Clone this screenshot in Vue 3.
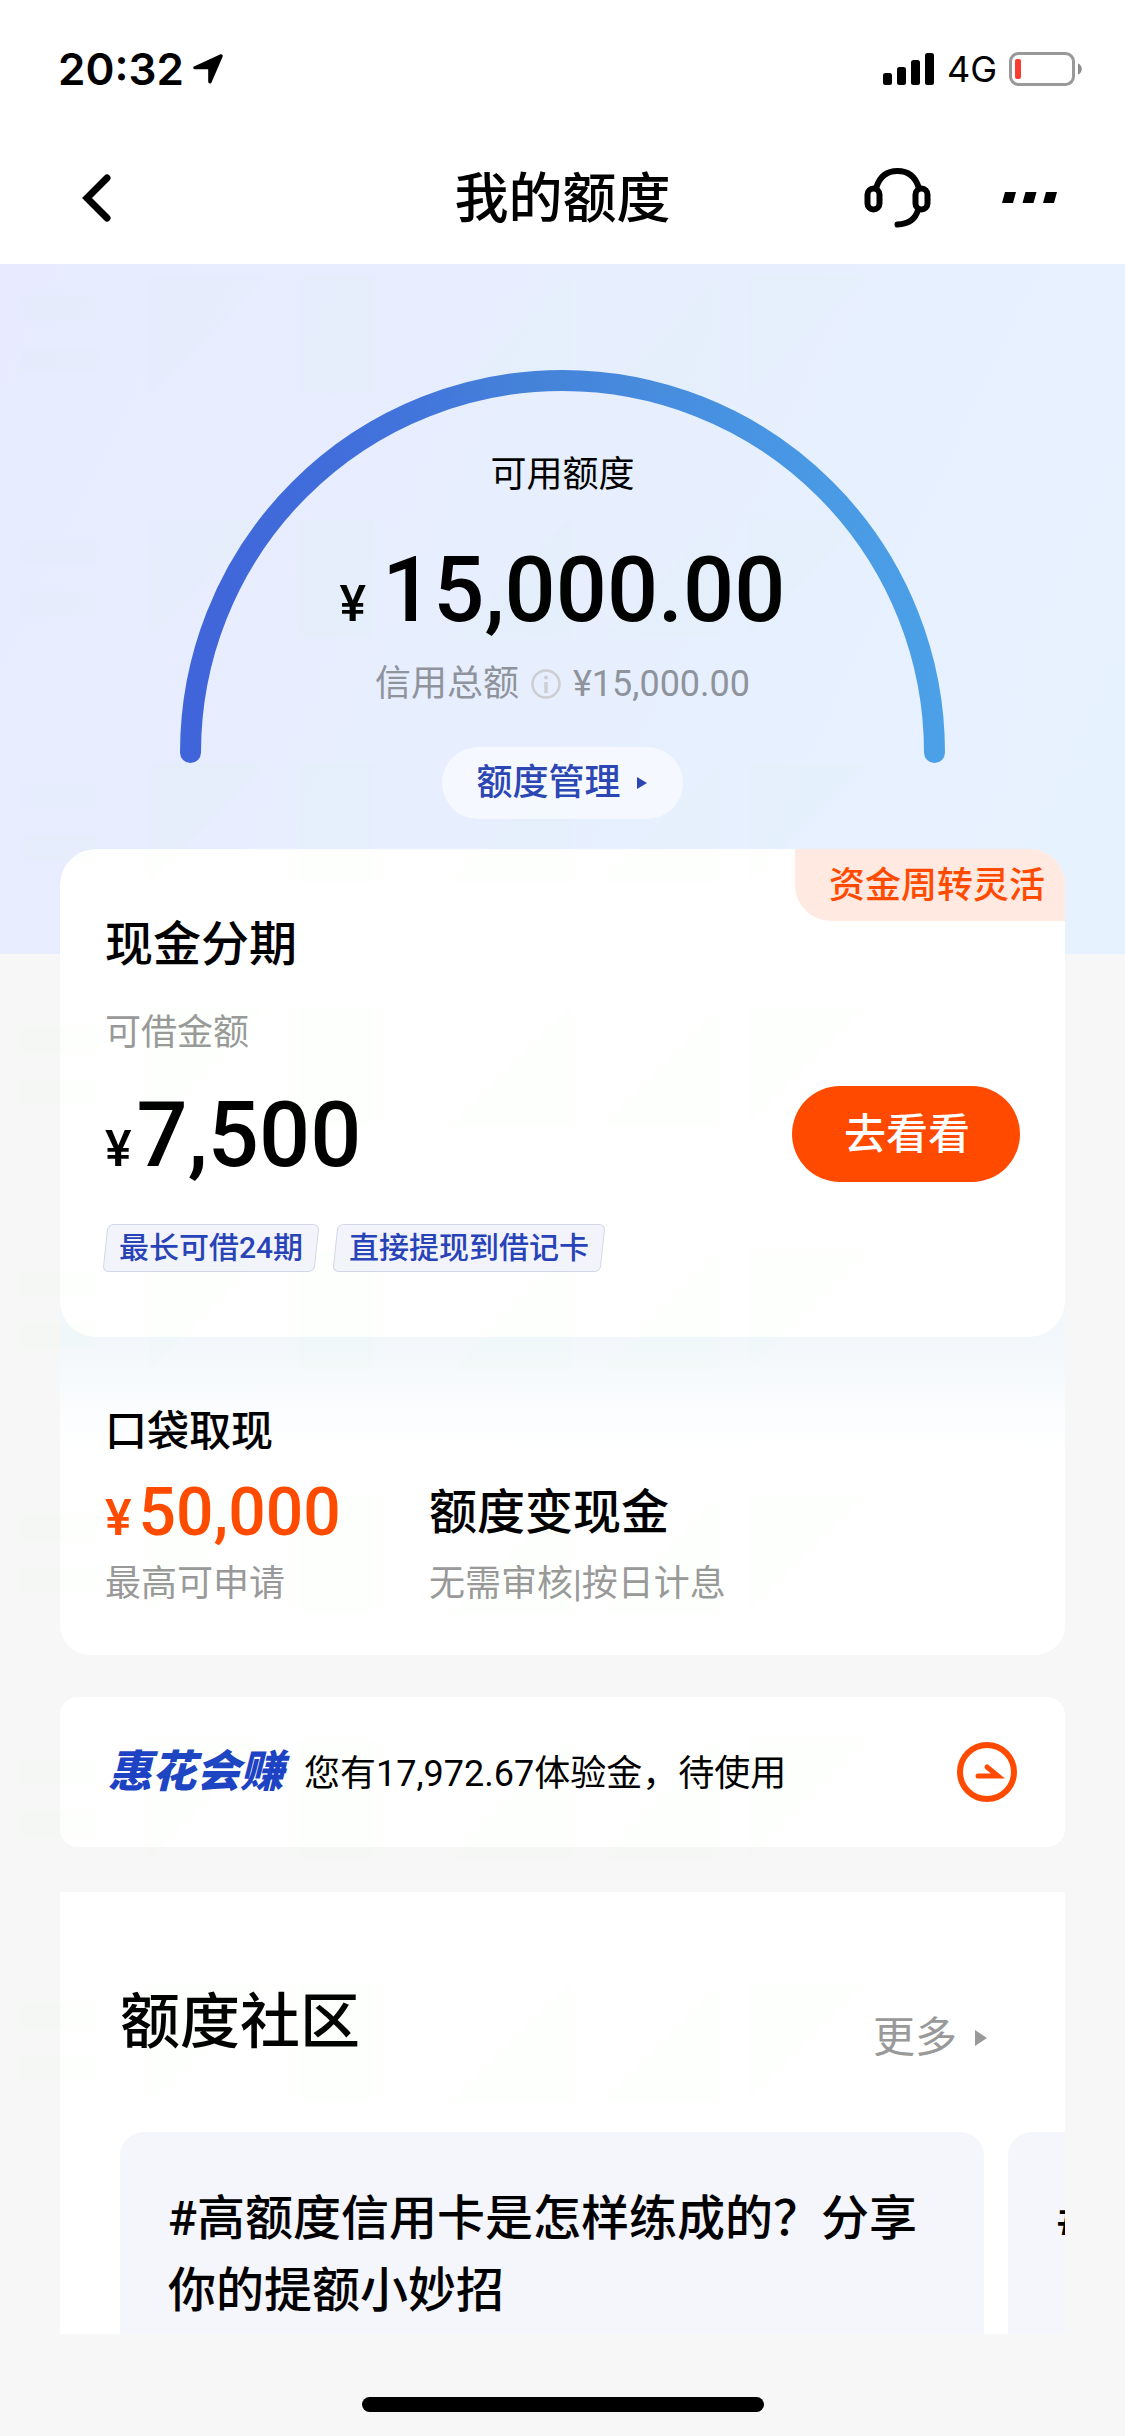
<script setup>
const benefits = ['最长可借24期', '直接提现到借记卡']
const topics = ['#高额度信用卡是怎样练成的？分享你的提额小妙招', '#额度']
</script>

<template>
  <div class="page">
    <div class="status">
      <div class="status-group">
        <span class="time">20:32</span>
        <svg class="location" width="32" height="32" viewBox="0 0 32 32" aria-hidden="true">
          <path d="M2.500 13.200 28 1.400c2-.8 3.300.5 2.500 2.500L19.600 29.200c-.9 2-3.400 1.500-3.400-.7V16.200H3.300c-2.300 0-2.800-2.200-.8-3z" fill="#000" />
        </svg>
      </div>
      <div class="status-group">
        <svg width="52" height="34" viewBox="0 0 52 34" aria-hidden="true">
          <rect x="0" y="21" width="9" height="12" rx="2.500" />
          <rect x="14" y="15" width="9" height="18" rx="2.500" />
          <rect x="28" y="8" width="9" height="25" rx="2.500" />
          <rect x="42" y="1" width="9" height="32" rx="2.500" />
        </svg>
        <span class="network">4G</span>
        <svg width="74" height="34" viewBox="0 0 74 34" aria-hidden="true">
          <rect x="1.500" y="1.500" width="63" height="31" rx="8" fill="none" stroke="#999" stroke-width="3" />
          <rect x="6" y="7" width="6" height="20" rx="2" fill="#fb3a30" />
          <path d="M69 11.500c5 1.500 5 9.500 0 11z" fill="#8c8c8c" />
        </svg>
      </div>
    </div>

    <header class="nav">
      <button class="icon-button" type="button" aria-label="返回">
        <svg width="58" height="50" viewBox="-13 0 58 50">
          <path d="M27 5 7 25l20 20" fill="none" stroke="#000" stroke-width="7" stroke-linecap="round" stroke-linejoin="miter" />
        </svg>
      </button>
      <h1>我的额度</h1>
      <div class="nav-actions">
        <button class="icon-button" type="button" aria-label="客服">
          <svg width="68" height="62" viewBox="0 0 68 62" fill="none" stroke="#000" stroke-width="6">
            <path d="M12.500 20C16 9 24 4 33.500 4S51 9 54.500 20" />
            <rect x="3.500" y="21.500" width="12" height="21" rx="6" />
            <rect x="51.500" y="21.500" width="12" height="21" rx="6" />
            <path d="M54 43c-2.500 9-9 14-20.500 14.500" stroke-linecap="round" />
          </svg>
        </button>
        <button class="icon-button" type="button" aria-label="更多操作">
          <svg width="56" height="12" viewBox="0 0 56 12">
            <path d="M3 0h11l-3 11H0zM23.500 0h11l-3 11h-11zM44 0h11l-3 11H41z" />
          </svg>
        </button>
      </div>
    </header>

    <main>
      <section class="hero">
        <svg class="arc" width="765" height="393" viewBox="0 0 765 393" aria-hidden="true">
          <defs>
            <linearGradient id="arcTone" x1="0" y1="0" x2="1" y2="0">
              <stop offset="0" stop-color="#4065da" />
              <stop offset="0.2" stop-color="#416edb" />
              <stop offset="0.5" stop-color="#4584dc" />
              <stop offset="0.8" stop-color="#4997e4" />
              <stop offset="1" stop-color="#4ba0e7" />
            </linearGradient>
          </defs>
          <path d="M10.500 382.500A372 372 0 0 1 754.500 382.500" fill="none" stroke="url(#arcTone)" stroke-width="21" stroke-linecap="round" />
        </svg>
        <div class="summary">
          <p class="summary-label">可用额度</p>
          <p class="summary-amount"><span class="yen">¥</span><span class="figure">15,000.00</span></p>
          <p class="summary-total">
            <span>信用总额</span>
            <svg width="30" height="30" viewBox="0 0 30 30" aria-hidden="true">
              <circle cx="15" cy="15" r="13.500" fill="none" stroke="#cdced2" stroke-width="2.500" />
              <circle cx="15" cy="8.500" r="2" fill="#cdced2" />
              <path d="M15 13v11" stroke="#cdced2" stroke-width="3.500" />
            </svg>
            <span>¥15,000.00</span>
          </p>
          <button class="manage" type="button">
            额度管理
            <svg width="10" height="12" viewBox="0 0 10 12" aria-hidden="true"><path d="M0 0 10 6 0 12z" fill="#2c46b4" /></svg>
          </button>
        </div>
      </section>

      <div class="cards">
        <section class="card loan">
          <span class="ribbon">资金周转灵活</span>
          <h2>现金分期</h2>
          <p class="muted loan-label">可借金额</p>
          <div class="loan-row">
            <p class="loan-amount"><span class="yen">¥</span><span class="figure">7,500</span></p>
            <button class="go" type="button">去看看</button>
          </div>
          <ul class="benefits">
            <li v-for="item in benefits" :key="item">{{ item }}</li>
          </ul>
        </section>

        <section class="pocket">
          <h3>口袋取现</h3>
          <div class="pocket-grid">
            <div>
              <p class="pocket-amount"><span class="yen">¥</span><span class="figure">50,000</span></p>
              <p class="muted">最高可申请</p>
            </div>
            <div>
              <p class="pocket-title">额度变现金</p>
              <p class="muted">无需审核|按日计息</p>
            </div>
          </div>
        </section>

        <a class="card earn" href="#">
          <em>惠花会赚</em>
          <span class="earn-text">您有17,972.67体验金，待使用</span>
          <svg width="60" height="60" viewBox="0 0 60 60" fill="none" stroke="#ff4a00" aria-hidden="true">
            <circle cx="30" cy="30" r="27" stroke-width="6" />
            <path d="M21 34h20L30 25" stroke-width="5" stroke-linecap="round" stroke-linejoin="miter" />
          </svg>
        </a>

        <section class="community">
          <div class="community-head">
            <h2>额度社区</h2>
            <a class="more" href="#">
              更多
              <svg width="12" height="16" viewBox="0 0 12 16" aria-hidden="true"><path d="M0 0 12 8 0 16z" fill="#999" /></svg>
            </a>
          </div>
          <div class="topics">
            <article v-for="topic in topics" :key="topic">{{ topic }}</article>
          </div>
        </section>
      </div>

      <svg class="watermark" aria-hidden="true">
        <defs>
          <pattern id="mark" width="900" height="244" patternUnits="userSpaceOnUse" y="11">
            <path
              d="M22 20h75v26H22zM22 72h75v26H22zM150 0h116L150 119zM298 0h76v119h-76zM570 0v119H452zM719 0v119H603zM749 0h117L749 117z"
              fill="#40ff20"
              fill-opacity="0.012"
            />
          </pattern>
        </defs>
        <rect width="900" height="100%" fill="url(#mark)" />
      </svg>
    </main>

    <footer class="home"><span></span></footer>
  </div>
</template>

<style>
body {
  margin: 0;
  background: #f7f7f7;
}
</style>

<style scoped>
.page {
  display: flex;
  flex-direction: column;
  min-height: 100vh;
  overflow: hidden;
  background: #f7f7f7;
  color: #000;
  font-family: Roboto, "Noto Sans CJK SC", sans-serif;
  font-size: 36px;
  line-height: 48px;
}

h1,
h2,
h3,
p,
ul {
  margin: 0;
  padding: 0;
  font-weight: 500;
}

p {
  font-weight: 400;
}

button {
  padding: 0;
  border: 0;
  background: none;
  color: inherit;
  font: inherit;
  cursor: pointer;
}

a {
  color: inherit;
  text-decoration: none;
}

svg {
  display: block;
  flex: none;
}

.status {
  display: flex;
  justify-content: space-between;
  align-items: center;
  box-sizing: border-box;
  height: 132px;
  padding: 6px 42px 0 58px;
  background: #fff;
  font-family: Inter, sans-serif;
}

.status-group {
  display: flex;
  align-items: center;
  gap: 12px;
}

.status-group:first-child {
  gap: 8px;
}

.time {
  font-size: 44px;
  font-weight: 600;
}

.network {
  font-size: 36px;
  font-weight: 400;
}

.nav {
  display: grid;
  grid-template-columns: 1fr auto 1fr;
  align-items: center;
  height: 132px;
  padding: 0 67px;
  background: #fff;
}

.nav h1 {
  padding-top: 3px;
  font-size: 54px;
  line-height: 72px;
}

.nav-actions {
  display: flex;
  justify-content: flex-end;
  align-items: center;
  gap: 70px;
}

.icon-button {
  justify-self: start;
}

main {
  position: relative;
  flex: 1;
  display: flex;
  flex-direction: column;
}

.hero {
  display: grid;
  justify-items: center;
  padding: 106px 0 135px;
  background: linear-gradient(115deg, #e8ebff 0%, #e7effe 50%, #e7f2ff 100%);
}

.arc,
.summary {
  grid-area: 1 / 1;
}

.summary {
  display: flex;
  flex-direction: column;
  align-items: center;
  padding-top: 81px;
}

.figure,
.yen {
  font-weight: 500;
}

.yen {
  font-size: 50px;
  line-height: 50px;
}

.summary-amount {
  display: flex;
  align-items: baseline;
  gap: 16px;
  margin-top: 38px;
  font-size: 90px;
  line-height: 108px;
}

.summary-total {
  display: flex;
  align-items: center;
  gap: 12px;
  margin-top: 15px;
  color: #8f939c;
}

.manage {
  display: flex;
  align-items: center;
  gap: 16px;
  height: 72px;
  margin-top: 39px;
  padding: 0 36px 0 34px;
  border-radius: 36px;
  background: rgba(255, 255, 255, 0.6);
  color: #2c46b4;
  font-weight: 500;
}

.cards {
  flex: 1;
  display: flex;
  flex-direction: column;
  margin: -105px 60px 0;
}

.card {
  background: #fff;
}

.muted {
  color: #999;
}

.loan {
  position: relative;
  z-index: 1;
  padding: 60px 45px 65px;
  border-radius: 36px;
}

.loan h2,
.pocket-title {
  font-size: 48px;
  line-height: 72px;
  font-weight: 500;
}

.ribbon {
  position: absolute;
  top: 0;
  right: 0;
  padding: 13px 20px 11px 34px;
  border-radius: 0 36px 0 36px;
  background: #ffe9e1;
  color: #ff4a00;
  font-weight: 500;
}

.loan-label {
  margin-top: 28px;
}

.loan-row {
  display: flex;
  justify-content: space-between;
  align-items: center;
  margin-top: 29px;
}

.loan-amount {
  display: flex;
  align-items: baseline;
  gap: 5px;
  padding-top: 4px;
  font-size: 90px;
  line-height: 92px;
}

.go {
  width: 228px;
  height: 96px;
  padding: 2px 0 0 2px;
  border-radius: 48px;
  background: #ff4a00;
  color: #fff;
  font-size: 42px;
  font-weight: 500;
}

.benefits {
  display: flex;
  gap: 18px;
  margin-top: 42px;
  list-style: none;
}

.benefits li {
  position: relative;
  z-index: 0;
  padding: 0 14px;
  color: #2843b8;
  font-size: 30px;
  font-weight: 500;
  line-height: 48px;
}

.benefits li::before {
  content: "";
  position: absolute;
  z-index: -1;
  inset: 0;
  border: 1px solid #d3d7ea;
  border-radius: 6px;
  background: #f3f4fb;
  transform: skewX(-6deg);
}

.pocket {
  margin-top: -36px;
  padding: 101px 45px 47px;
  border-radius: 0 0 30px 30px;
  background: linear-gradient(#f2f7fb 36px, #fff 150px);
}

.pocket h3 {
  font-size: 42px;
  line-height: 60px;
}

.pocket-grid {
  display: grid;
  grid-template-columns: 324px 1fr;
  margin-top: 15px;
}

.pocket-grid .muted {
  margin-top: 11px;
}

.pocket-amount {
  display: flex;
  align-items: baseline;
  gap: 7px;
  color: #ff4a00;
  font-size: 66px;
  line-height: 72px;
}

.earn {
  display: flex;
  align-items: center;
  height: 150px;
  margin-top: 42px;
  padding: 0 48px;
  border-radius: 18px;
}

.earn em {
  color: #1d43c4;
  font-size: 44px;
  font-weight: 900;
}

.earn-text {
  flex: 1;
  margin-left: 20px;
  padding-top: 3px;
}

.community {
  flex: 1;
  display: flex;
  flex-direction: column;
  margin-top: 45px;
  padding: 89px 0 0 60px;
  overflow: hidden;
  background: #fff;
}

.community-head {
  display: flex;
  justify-content: space-between;
  align-items: flex-end;
  padding-right: 78px;
}

.community-head h2 {
  font-size: 60px;
  line-height: 84px;
}

.more {
  display: flex;
  align-items: center;
  gap: 18px;
  color: #999;
  font-size: 42px;
  line-height: 54px;
}

.topics {
  flex: 1;
  display: flex;
  gap: 24px;
  margin-top: 67px;
}

.topics article {
  flex: none;
  box-sizing: border-box;
  width: 864px;
  max-width: 92%;
  padding: 51px 48px 5px;
  border-radius: 24px 24px 0 0;
  background: #f5f6fb;
  font-size: 48px;
  font-weight: 500;
  line-height: 72px;
}

.watermark {
  position: absolute;
  z-index: 2;
  top: 0;
  left: 0;
  width: 100%;
  height: 1850px;
  pointer-events: none;
}

.home {
  display: flex;
  justify-content: center;
  align-items: flex-end;
  box-sizing: border-box;
  height: 102px;
  padding-bottom: 24px;
}

.home span {
  width: 402px;
  height: 15px;
  border-radius: 8px;
  background: #000;
}
</style>
